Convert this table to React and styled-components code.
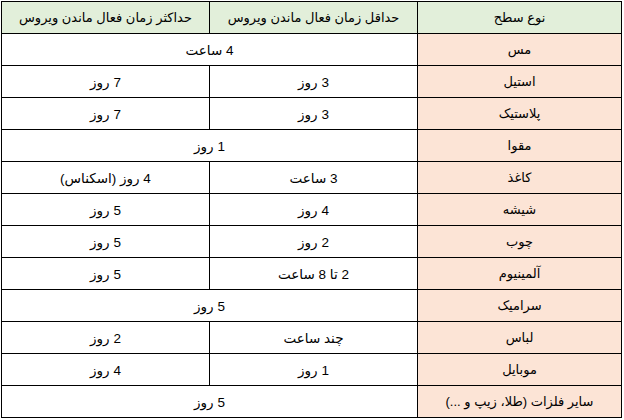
import React from "react";
import styled, { createGlobalStyle } from "styled-components";

const Global = createGlobalStyle`
  html, body { margin: 0; padding: 0; background: #ffffff; }
  body { font-family: "Liberation Sans", "DejaVu Sans", sans-serif; }
`;

const Page = styled.div`
  padding: 1px 0 0 1px;
  width: 624px;
  box-sizing: border-box;
`;

const Table = styled.table`
  direction: rtl;
  border-collapse: collapse;
  width: 620px;
  table-layout: fixed;
  font-family: "Liberation Sans", "DejaVu Sans", sans-serif;
  color: #000;
`;

const Row = styled.tr`
  height: 32px;
`;

const sizes = { head: "13px", type: "13px", data: "13.5px" };

const Cell = styled.td`
  border: 1px solid #000;
  padding: 0 4px;
  text-align: center;
  vertical-align: middle;
  white-space: nowrap;
  background: ${(p) => (p.$kind === "head" ? "#e2efda" : p.$kind === "type" ? "#fce4d6" : "#ffffff")};
  font-size: ${(p) => sizes[p.$kind || "data"]};
`;

const Footer = styled.div`
  margin-top: 2px;
  margin-left: 1px;
  width: 620px;
  border-top: 1px solid #d9d9d9;
`;

const rows = [
  ["مس", "4 ساعت"],
  ["استیل", "3 روز", "7 روز"],
  ["پلاستیک", "3 روز", "7 روز"],
  ["مقوا", "1 روز"],
  ["کاغذ", "3 ساعت", "4 روز (اسکناس)"],
  ["شیشه", "4 روز", "5 روز"],
  ["چوب", "2 روز", "5 روز"],
  ["آلمینیوم", "2 تا 8 ساعت", "5 روز"],
  ["سرامیک", "5 روز"],
  ["لباس", "چند ساعت", "2 روز"],
  ["موبایل", "1 روز", "4 روز"],
  ["سایر فلزات (طلا، زیپ و ...)", "5 روز"],
];

export default function App() {
  return (
    <>
      <Global />
      <Page>
        <Table>
          <colgroup>
            <col style={{ width: 204 }} />
            <col style={{ width: 208 }} />
            <col style={{ width: 208 }} />
          </colgroup>
          <tbody>
            <Row>
              <Cell $kind="head">نوع سطح</Cell>
              <Cell $kind="head">حداقل زمان فعال ماندن ویروس</Cell>
              <Cell $kind="head">حداکثر زمان فعال ماندن ویروس</Cell>
            </Row>
            {rows.map((r, i) => (
              <Row key={i}>
                <Cell $kind="type">{r[0]}</Cell>
                {r.length === 2 ? (
                  <Cell colSpan={2}>{r[1]}</Cell>
                ) : (
                  <>
                    <Cell>{r[1]}</Cell>
                    <Cell>{r[2]}</Cell>
                  </>
                )}
              </Row>
            ))}
          </tbody>
        </Table>
        <Footer />
      </Page>
    </>
  );
}
